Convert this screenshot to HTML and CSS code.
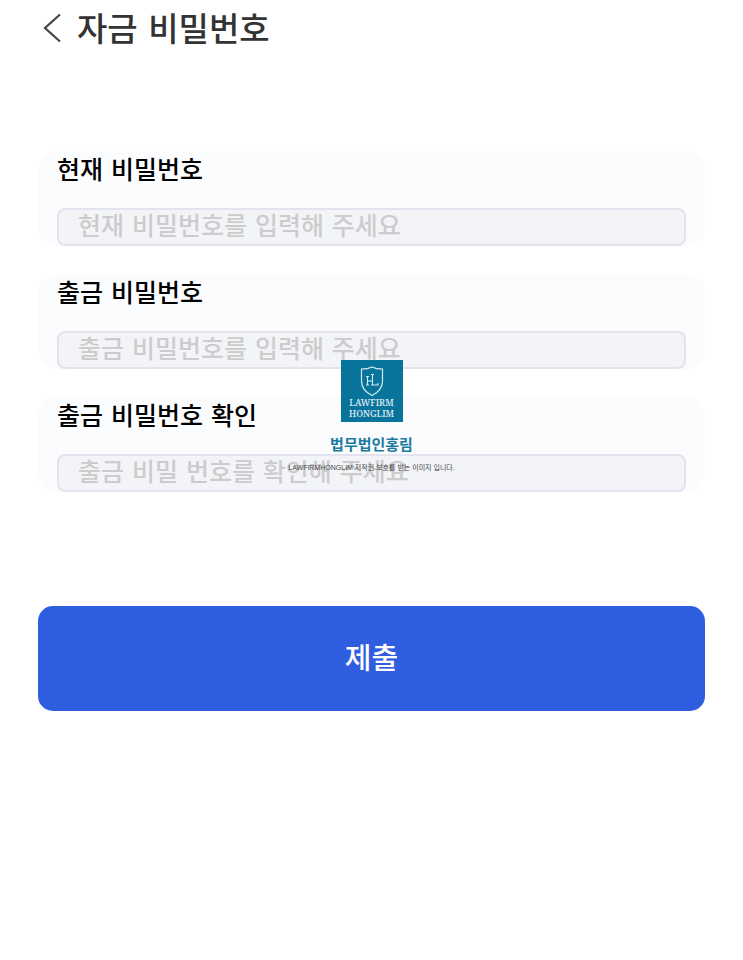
FILE: index.html
```html
<!DOCTYPE html>
<html lang="ko">
<head>
    <meta charset="UTF-8">
    <meta name="viewport" content="width=device-width, initial-scale=1.0">
    <title>자금 비밀번호</title>
    <link rel="stylesheet" href="styles.css">
</head>
<body>
    <header class="header">
        <button type="button" class="back" aria-label="뒤로">
            <svg width="18" height="30" viewBox="0 0 18 30">
                <path d="M17 1.5 L2 15 L17 28.5" fill="none" stroke="#444" stroke-width="2.2"/>
            </svg>
        </button>
        <h1>자금 비밀번호</h1>
    </header>

    <form class="password-form">
        <div class="field">
            <label for="current">현재 비밀번호</label>
            <input type="password" id="current" placeholder="현재 비밀번호를 입력해 주세요">
        </div>
        <div class="field">
            <label for="withdraw">출금 비밀번호</label>
            <input type="password" id="withdraw" placeholder="출금 비밀번호를 입력해 주세요">
        </div>
        <div class="field">
            <label for="confirm">출금 비밀번호 확인</label>
            <input type="password" id="confirm" placeholder="출금 비밀 번호를 확인해 주세요">
        </div>
        <button type="submit" class="submit">제출</button>

        <!-- Law firm watermark -->
        <div class="watermark">
            <div class="logo">
                <svg width="24" height="31" viewBox="0 0 24 31" fill="none" stroke="#d5e8ef">
                    <path d="M12 1 C9 2.6 5 3.2 1.5 3.2 V15 C1.5 22 6 26.5 12 29.5 C18 26.5 22.5 22 22.5 15 V3.2 C19 3.2 15 2.6 12 1 Z" stroke-width="1.2"/>
                    <path d="M7.5 10.5 V19 M6 10.5 H9 M6 19 H9 M7.5 15 H12.5 M12.5 8.5 V19 M11 8.5 H14 M11 19 H18 V17" stroke-width="1.1"/>
                </svg>
                <span>LAWFIRM</span>
                <span>HONGLIM</span>
            </div>
            <p class="firm">법무법인홍림</p>
            <p class="notice">LAWFIRMHONGLIM 저작권 보호를 받는 이미지 입니다.</p>
        </div>
    </form>
</body>
</html>
```
FILE: styles.css
```css
* {
    box-sizing: border-box;
}

body {
    margin: 0;
    background-color: #fff;
    font-family: "DejaVu Sans", "Noto Sans CJK KR", sans-serif;
    font-weight: 500;
    color: #000;
}

button,
input {
    font: inherit;
}

.header {
    display: flex;
    align-items: flex-end;
    gap: 16px;
    height: 58px;
    padding: 0 43px;
}

.back {
    display: flex;
    margin-bottom: 15px;
    padding: 0;
    border: 0;
    background: none;
}

h1 {
    margin: 0;
    font-size: 33px;
    line-height: 56px;
    font-weight: 500;
    color: #333;
}

.password-form {
    position: relative;
    display: flex;
    flex-direction: column;
    gap: 28px;
    margin-top: 93px;
    padding: 0 38px;
}

.field {
    display: flex;
    flex-direction: column;
    gap: 17px;
    padding: 0 19px;
    border-radius: 19px;
    background-color: #fbfcfe;
}

.field label {
    font-size: 25px;
    line-height: 40px;
}

.field input {
    width: 100%;
    height: 38px;
    padding: 0 19px 2px;
    border: 2px solid #e2e3ef;
    border-radius: 8px;
    background-color: #f3f4f8;
    font-size: 25px;
}

.field input::placeholder {
    color: #ccc;
    opacity: 1;
}

.submit {
    height: 105px;
    margin-top: 86px;
    padding: 0 0 5px;
    border: 0;
    border-radius: 15px;
    background-color: #2f5de0;
    color: #fff;
    font-size: 29px;
}

/* Watermark */
.watermark {
    position: absolute;
    top: 209px;
    left: 0;
    right: 0;
    display: flex;
    flex-direction: column;
    align-items: center;
    pointer-events: none;
}

.logo {
    display: flex;
    flex-direction: column;
    align-items: center;
    width: 62px;
    height: 62px;
    padding-top: 6px;
    background-color: #08749c;
    color: #e4f0f5;
    font-family: "Noto Serif", "Liberation Serif", serif;
    font-size: 9px;
    line-height: 11px;
}

.firm {
    margin: 12px 0 0;
    font-size: 15px;
    font-weight: 700;
    line-height: 22px;
    color: #1a7ba1;
}

.notice {
    margin: 7px 0 0;
    font-family: "Liberation Sans", "Noto Sans CJK KR", sans-serif;
    font-size: 7px;
    line-height: 10px;
    font-weight: 400;
    color: #444;
}
```
